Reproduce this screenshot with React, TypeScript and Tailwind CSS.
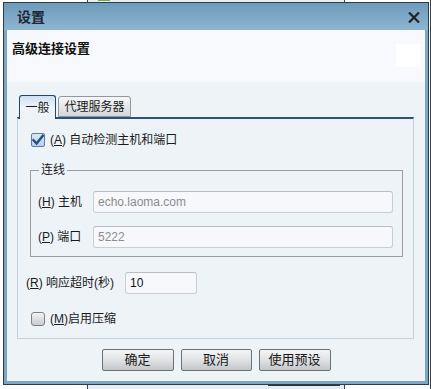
import React from "react";

const F = { fontFamily: '"Liberation Sans", "Noto Sans CJK SC", sans-serif' };

function CheckBox({ checked }: { checked: boolean }) {
  if (checked) {
    return (
      <div className="w-[14px] h-[14px] rounded-[2px] border border-[#5a7ea6] bg-gradient-to-b from-[#dbe8f5] to-[#b9cfe6] flex items-center justify-center">
        <svg width="12" height="12" viewBox="0 0 12 12">
          <path d="M1.5 6.2 L4.6 9.5 L10.8 1.8" fill="none" stroke="#1f4f82" strokeWidth="2.4" strokeLinecap="square" />
        </svg>
      </div>
    );
  }
  return <div className="w-[14px] h-[14px] rounded-[3px] border border-[#7d8287] bg-gradient-to-b from-[#f3f3f3] to-[#c9cbce]" />;
}

function Btn({ label, w }: { label: string; w: string }) {
  return (
    <div
      className={`${w} h-[22px] rounded-[2px] border border-[#6f7173] bg-gradient-to-b from-[#f4f5f6] via-[#e0e2e4] to-[#c3c6c9] flex items-center justify-center text-[13px] text-[#1a1a1a]`}
    >
      {label}
    </div>
  );
}

function Field({ value, w, dim }: { value: string; w: string; dim?: boolean }) {
  return (
    <div
      className={`${w} h-[22px] rounded-[3px] border border-[#c9ced4] border-t-[#b9bec4] bg-[#f6f8fb] flex items-center pl-[4px] text-[12px] ${
        dim ? "text-[#8c8c8c]" : "text-[#111]"
      }`}
    >
      {value}
    </div>
  );
}

export default function App() {
  return (
    <div className="relative w-[431px] h-[389px] bg-white overflow-hidden" style={F}>
      {/* window behind */}
      <div className="absolute left-[87px] top-[-30px] w-[258px] h-[450px] border border-[#3a3f45] bg-[#e6edf5]">
        <div className="absolute left-[10px] top-[22px] w-[12px] h-[8px] bg-[#6aa84f]" />
        <div className="absolute left-[180px] bottom-[33px] w-[72px] h-[2px] bg-[#333]" />
      </div>
      <div className="absolute left-[430px] top-0 w-[1px] h-[389px] bg-[#3a3f45]" />

      {/* dialog */}
      <div className="absolute left-[3px] top-[2px] w-[426px] h-[383px] border border-[#2f3b47] bg-[#7ba6c4] flex flex-col">
        {/* title bar */}
        <div className="h-[27px] shrink-0 bg-gradient-to-b from-[#6e9bbb] to-[#8db5d1] flex items-center pl-[13px] pr-[8px] justify-between">
          <span className="text-[14px] font-bold text-[#1c2733] leading-none">设置</span>
          <svg width="12" height="11" viewBox="0 0 12 11" className="mt-[2px]">
            <path d="M1 0.5 L11 10.5 M11 0.5 L1 10.5" stroke="#1e2328" strokeWidth="2.2" />
          </svg>
        </div>
        {/* content */}
        <div className="mx-[3px] mb-[3px] flex-1 flex flex-col">
          <div className="h-[52px] shrink-0 bg-[#f7f9fc] relative pl-[5px] pt-[6px]">
            <span className="text-[13px] font-bold text-[#111]">高级连接设置</span>
            <div className="absolute left-[389px] top-[14px] w-[24px] h-[23px] bg-white" />
          </div>
          <div className="flex-1 bg-[#eef3f8] pl-[10px] pt-[13px] flex flex-col text-[12px] text-[#1a1a1a]">
            {/* tabs */}
            <div className="flex items-start pl-[2px] gap-[2px] h-[22px] relative z-10">
              <div className="w-[37px] h-[24px] rounded-t-[3px] border border-[#23466d] border-b-0 bg-gradient-to-b from-[#cfe0f0] via-[#eef4fa] to-[#eef3f8] flex items-center justify-center text-[12px]">
                一般
              </div>
              <div className="mt-[1px] w-[73px] h-[21px] rounded-t-[3px] border border-[#8e98a3] bg-gradient-to-b from-[#f7f7f7] to-[#d4d8dc] flex items-center justify-center text-[12px]">
                代理服务器
              </div>
            </div>
            {/* panel */}
            <div className="w-[397px] h-[222px] border border-[#c4d1df] border-t-2 border-t-[#2d5277] flex flex-col">
              <div className="mt-[13px] ml-[13px] flex items-center gap-[5px] h-[16px]">
                <CheckBox checked />
                <span>
                  (<u>A</u>) 自动检测主机和端口
                </span>
              </div>
              <fieldset className="mt-[14px] ml-[12px] w-[373px] border border-[#9a9ea3] pl-[7px] pr-[8px] pb-[8px]">
                <legend className="ml-[1px] px-[2px] text-[12px] leading-[16px]">连线</legend>
                <div className="mt-[13px] flex items-center">
                  <span className="w-[55px]">
                    (<u>H</u>) 主机
                  </span>
                  <Field value="echo.laoma.com" w="w-[300px]" dim />
                </div>
                <div className="mt-[13px] flex items-center">
                  <span className="w-[55px]">
                    (<u>P</u>) 端口
                  </span>
                  <Field value="5222" w="w-[300px]" dim />
                </div>
              </fieldset>
              <div className="mt-[15px] ml-[8px] flex items-center">
                <span className="w-[99px]">
                  (<u>R</u>) 响应超时(秒)
                </span>
                <Field value="10" w="w-[72px]" />
              </div>
              <div className="mt-[17px] ml-[13px] flex items-center gap-[5px] h-[16px]">
                <CheckBox checked={false} />
                <span>
                  (<u>M</u>)启用压缩
                </span>
              </div>
            </div>
            {/* buttons */}
            <div className="mt-[10px] flex justify-center gap-[7px] pr-[10px]">
              <Btn label="确定" w="w-[72px]" />
              <Btn label="取消" w="w-[71px]" />
              <Btn label="使用预设" w="w-[72px]" />
            </div>
          </div>
        </div>
      </div>
    </div>
  );
}
